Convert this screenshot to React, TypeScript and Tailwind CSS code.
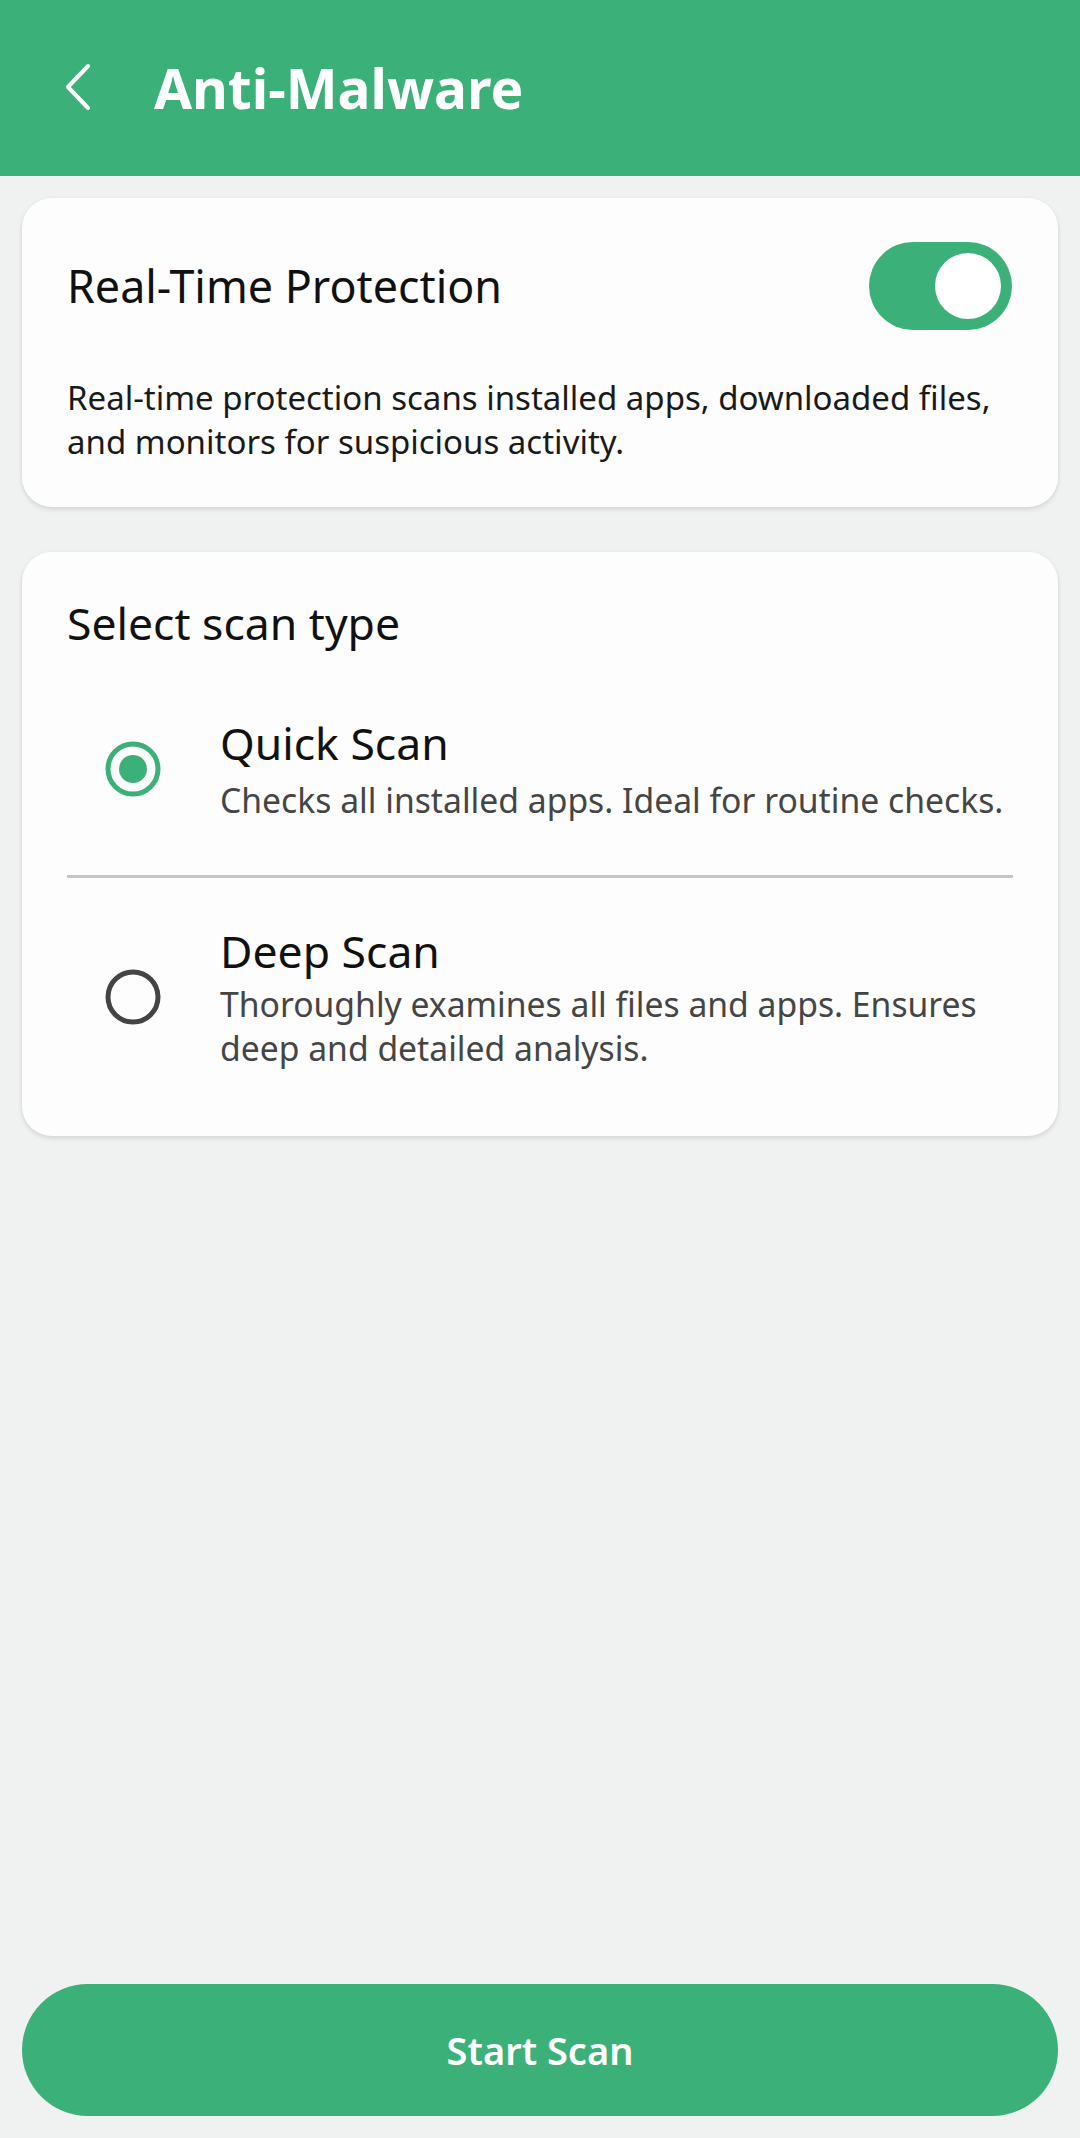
import React, { useState } from "react";

function Radio({ checked }: { checked: boolean }) {
  return (
    <svg width="56" height="56" viewBox="0 0 56 56" className="shrink-0">
      <circle cx="28" cy="28" r="25" fill="none" stroke={checked ? "#3cb079" : "#444444"} strokeWidth="5" />
      {checked && <circle cx="28" cy="28" r="14" fill="#3cb079" />}
    </svg>
  );
}

export default function App() {
  const [sel, setSel] = useState<"quick" | "deep">("quick");
  const [on, setOn] = useState(true);
  return (
    <div
      className="w-[1080px] h-[2138px] flex flex-col bg-[#eff2f1]"
      style={{ fontFamily: '"Noto Sans", "Open Sans", sans-serif' }}
    >
      <header className="h-[176px] bg-[#3cb079] flex items-center shrink-0">
        <svg width="40" height="60" viewBox="0 0 40 60" className="ml-[58px] mt-[-2px]">
          <polyline points="30,9 10,30 30,51" fill="none" stroke="#ffffff" strokeWidth="4" strokeLinecap="round" strokeLinejoin="round" />
        </svg>
        <h1 className="ml-[56px] text-white font-bold text-[55px] leading-none mt-[-2px]">Anti-Malware</h1>
      </header>

      <main className="flex-1 flex flex-col px-[22px]">
        <section className="mt-[22px] bg-[#fdfdfd] rounded-[30px] shadow-[0_2px_5px_rgba(0,0,0,0.13)] px-[45px] pt-[44px] pb-[43px]">
          <div className="h-[88px] flex items-center justify-between">
            <span className="text-[44.8px] text-[#111111]">Real-Time Protection</span>
            <button
              onClick={() => setOn(!on)}
              className={`w-[143px] h-[88px] rounded-full flex items-center px-[11px] mr-[1px] ${on ? "bg-[#3cb079] justify-end" : "bg-[#bdbdbd] justify-start"}`}
            >
              <span className="block w-[66px] h-[66px] rounded-full bg-white" />
            </button>
          </div>
          <p className="mt-[46px] text-[33px] leading-[44px] text-[#1a1a1a]">
            Real-time protection scans installed apps, downloaded files, and monitors for suspicious activity.
          </p>
        </section>

        <section className="mt-[45px] bg-[#fdfdfd] rounded-[30px] shadow-[0_2px_5px_rgba(0,0,0,0.13)] px-[45px] pt-[41px] pb-[66px]">
          <h2 className="text-[44.5px] leading-[60px] text-[#111111]">Select scan type</h2>

          <button onClick={() => setSel("quick")} className="mt-[62px] w-full flex items-center text-left">
            <div className="ml-[38px] mr-[59px]">
              <Radio checked={sel === "quick"} />
            </div>
            <div className="flex flex-col">
              <span className="text-[44.5px] leading-[56px] text-[#111111]">Quick Scan</span>
              <span className="mt-[7px] text-[33.7px] leading-[44px] text-[#454545]">
                Checks all installed apps. Ideal for routine checks.
              </span>
            </div>
          </button>

          <div className="mt-[53px] h-[3px] bg-[#c6c6c6]" />

          <button onClick={() => setSel("deep")} className="mt-[45px] w-full flex items-center text-left">
            <div className="ml-[38px] mr-[59px]">
              <Radio checked={sel === "deep"} />
            </div>
            <div className="flex flex-col">
              <span className="text-[44.5px] leading-[56px] text-[#111111]">Deep Scan</span>
              <span className="mt-[3px] text-[33.7px] leading-[44px] text-[#454545]">
                Thoroughly examines all files and apps. Ensures deep and detailed analysis.
              </span>
            </div>
          </button>
        </section>

        <div className="flex-1" />

        <button className="mb-[22px] h-[132px] w-full rounded-full bg-[#3cb079] text-white text-[38px] font-semibold">
          Start Scan
        </button>
      </main>
    </div>
  );
}
